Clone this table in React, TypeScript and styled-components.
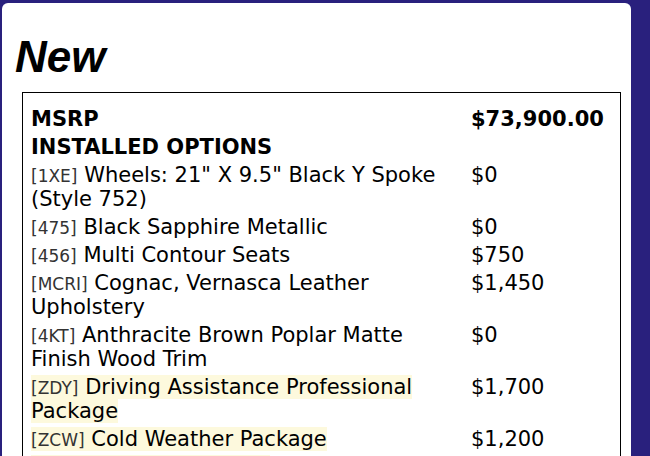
import React from 'react';
import styled, { createGlobalStyle } from 'styled-components';

const GlobalStyle = createGlobalStyle`
  html, body {
    margin: 0;
    padding: 0;
    background-color: #29207d;
    overflow: hidden;
  }
`;

const Card = styled.div`
  background-color: #fff;
  margin: 3px 19px 0 2px;
  border-radius: 6px 6px 0 0;
  padding: 33px 10px 40px 13px;
  min-height: 600px;
  font-family: "DejaVu Sans", sans-serif;
  color: #000;
`;

const Heading = styled.h1`
  font-family: "Liberation Sans", Arial, sans-serif;
  font-style: italic;
  font-weight: bold;
  font-size: 44px;
  line-height: 42px;
  margin: 0 0 14px 0;
`;

const OptionsTable = styled.div`
  border: 1px solid #000;
  margin-left: 7px;
  padding: 14px 8px 14px 8px;
  display: grid;
  grid-template-columns: 440px 1fr;
  row-gap: 4px;
  font-size: 21px;
  line-height: 24px;
`;

const Label = styled.div<{ $bold?: boolean }>`
  font-weight: ${(p) => (p.$bold ? 'bold' : 'normal')};
  padding-right: 10px;
`;

const Price = styled.div<{ $bold?: boolean }>`
  font-weight: ${(p) => (p.$bold ? 'bold' : 'normal')};
`;

const Highlight = styled.span<{ $on?: boolean }>`
  background-color: ${(p) => (p.$on ? '#fdf9dd' : 'transparent')};
`;

const Code = styled.span`
  font-size: 17px;
  line-height: 20px;
  color: #333;
`;

const options = [
  { code: '1XE', name: 'Wheels: 21" X 9.5" Black Y Spoke (Style 752)', price: '$0' },
  { code: '475', name: 'Black Sapphire Metallic', price: '$0' },
  { code: '456', name: 'Multi Contour Seats', price: '$750' },
  { code: 'MCRI', name: 'Cognac, Vernasca Leather Upholstery', price: '$1,450' },
  { code: '4KT', name: 'Anthracite Brown Poplar Matte Finish Wood Trim', price: '$0' },
  { code: 'ZDY', name: 'Driving Assistance Professional Package', price: '$1,700', hl: true },
  { code: 'ZCW', name: 'Cold Weather Package', price: '$1,200', hl: true },
  { code: 'ZPP', name: 'Premium Package', price: '$2,500', hl: true },
];

const App: React.FC = () => {
  return (
    <>
      <GlobalStyle />
      <Card>
        <Heading>New</Heading>
        <OptionsTable>
          <Label $bold>MSRP</Label>
          <Price $bold>$73,900.00</Price>
          <Label $bold>INSTALLED OPTIONS</Label>
          <div />
          {options.map((o) => (
            <React.Fragment key={o.code}>
              <Label>
                <Highlight $on={o.hl}>
                  <Code>[{o.code}]</Code> {o.name}
                </Highlight>
              </Label>
              <Price>{o.price}</Price>
            </React.Fragment>
          ))}
        </OptionsTable>
      </Card>
    </>
  );
};

export default App;
